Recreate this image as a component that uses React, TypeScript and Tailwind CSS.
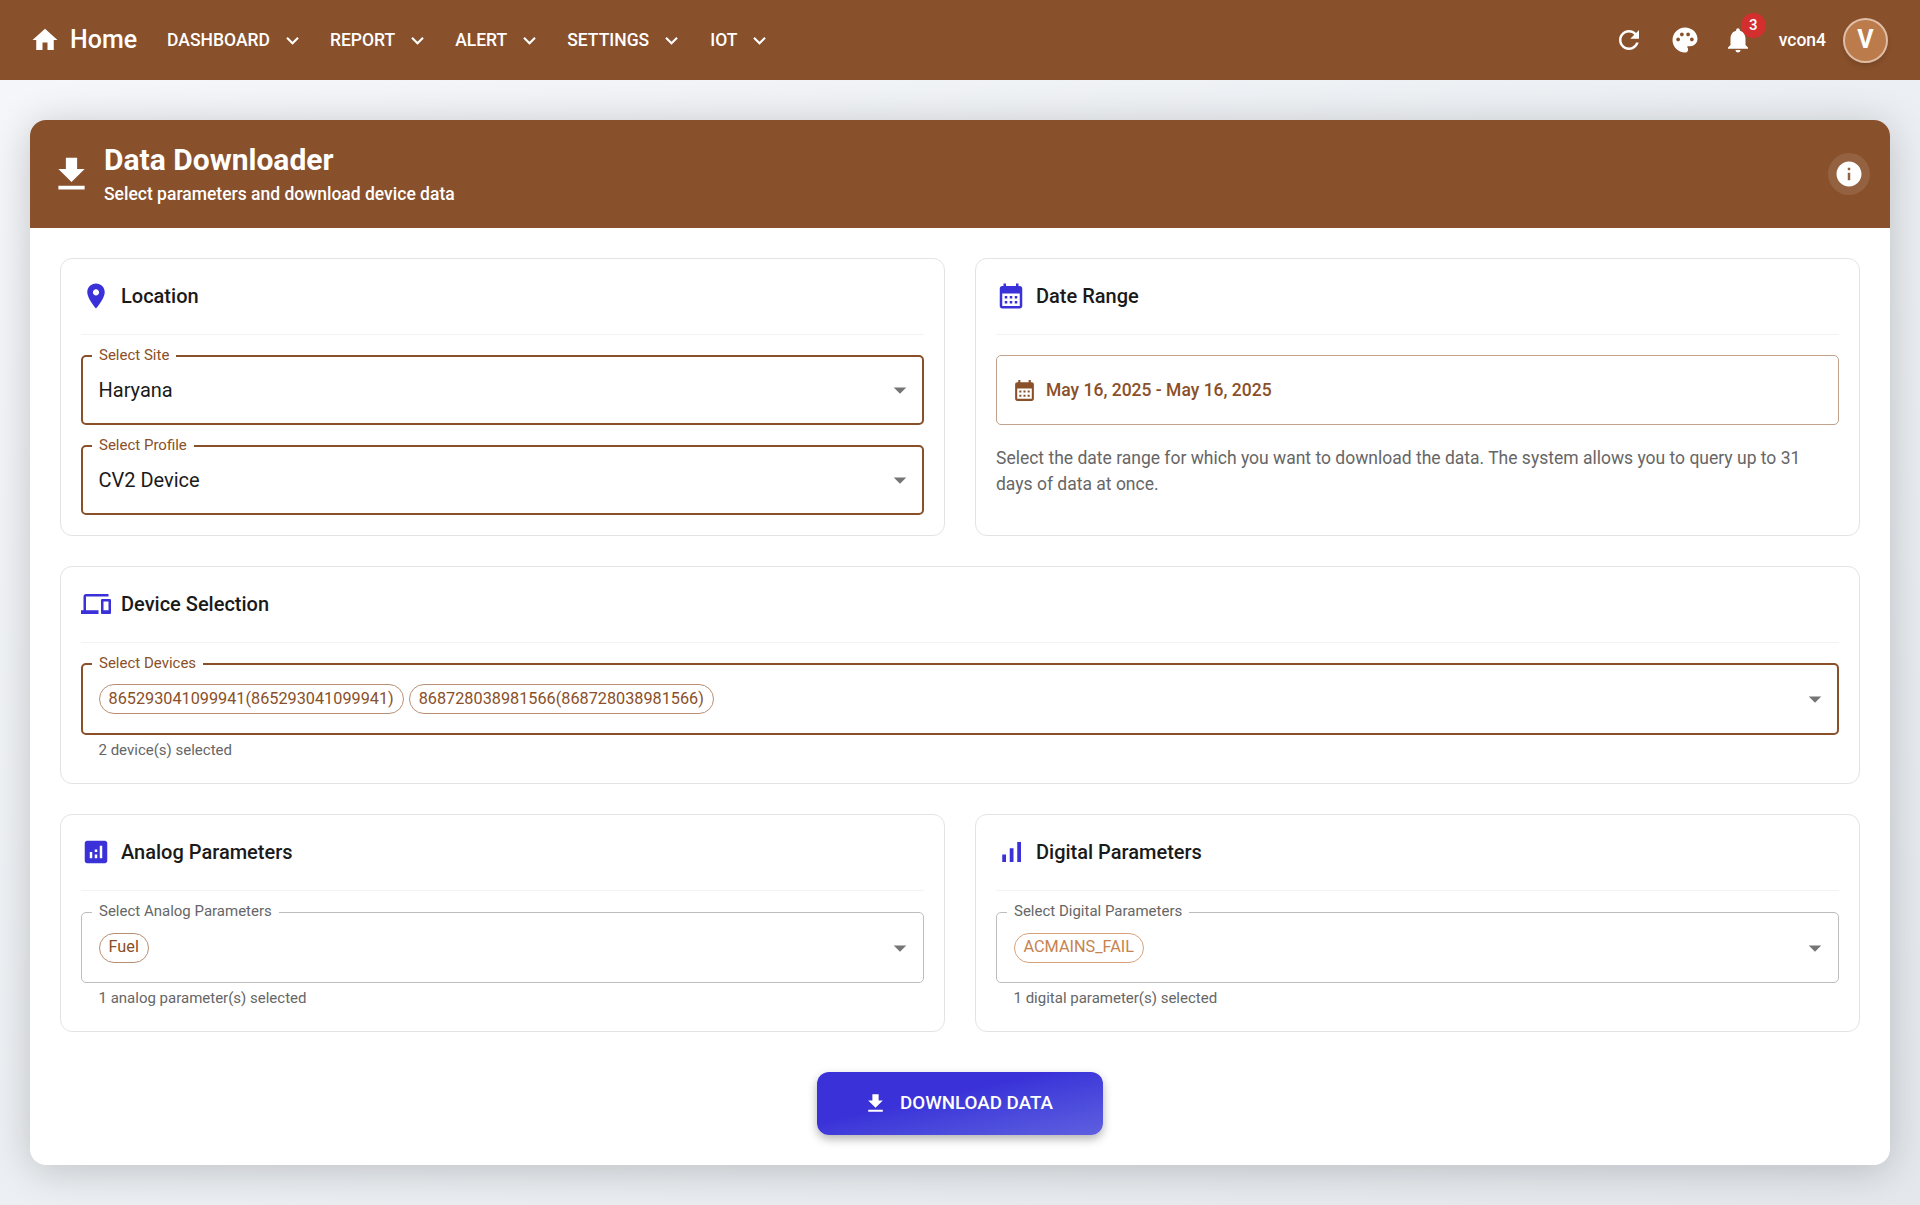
import React from "react";

const P = {
  home: "M10 20v-6h4v6h5v-8h3L12 3 2 12h3v8z",
  down: "M7.41 8.59 12 13.17l4.59-4.58L18 10l-6 6-6-6 1.41-1.41z",
  refresh: "M17.65 6.35C16.2 4.9 14.21 4 12 4c-4.42 0-7.99 3.58-7.99 8s3.57 8 7.99 8c3.73 0 6.84-2.55 7.73-6h-2.08c-.82 2.33-3.04 4-5.65 4-3.31 0-6-2.69-6-6s2.69-6 6-6c1.66 0 3.14.69 4.22 1.78L13 11h7V4l-2.35 2.35z",
  palette: "M12 2C6.49 2 2 6.49 2 12s4.49 10 10 10c1.38 0 2.5-1.12 2.5-2.5 0-.61-.23-1.2-.64-1.67-.08-.1-.13-.21-.13-.33 0-.28.22-.5.5-.5H16c3.31 0 6-2.69 6-6 0-4.96-4.49-9-10-9zm5.5 11c-.83 0-1.5-.67-1.5-1.5s.67-1.5 1.5-1.5 1.5.67 1.5 1.5-.67 1.5-1.5 1.5zm-3-4c-.83 0-1.5-.67-1.5-1.5S13.67 6 14.5 6s1.5.67 1.5 1.5S15.33 9 14.5 9zM5 11.5c0-.83.67-1.5 1.5-1.5s1.5.67 1.5 1.5S7.33 13 6.5 13 5 12.33 5 11.5zm6-4c0 .83-.67 1.5-1.5 1.5S8 8.33 8 7.5 8.67 6 9.5 6s1.5.67 1.5 1.5z",
  bell: "M12 22c1.1 0 2-.9 2-2h-4c0 1.1.89 2 2 2zm6-6v-5c0-3.07-1.64-5.64-4.5-6.32V4c0-.83-.67-1.5-1.5-1.5s-1.5.67-1.5 1.5v.68C7.63 5.36 6 7.92 6 11v5l-2 2v1h16v-1l-2-2z",
  info: "M12 2C6.48 2 2 6.48 2 12s4.48 10 10 10 10-4.48 10-10S17.52 2 12 2zm1 15h-2v-6h2v6zm0-8h-2V7h2v2z",
  download: "M5 20h14v-2H5v2zM19 9h-4V3H9v6H5l7 7 7-7z",
  pin: "M12 2C8.13 2 5 5.13 5 9c0 5.25 7 13 7 13s7-7.75 7-13c0-3.87-3.13-7-7-7zm0 9.5c-1.38 0-2.5-1.12-2.5-2.5s1.12-2.5 2.5-2.5 2.5 1.12 2.5 2.5-1.12 2.5-2.5 2.5z",
  calendar: "M19 4h-1V2h-2v2H8V2H6v2H5c-1.11 0-1.99.9-1.99 2L3 20c0 1.1.89 2 2 2h14c1.1 0 2-.9 2-2V6c0-1.1-.9-2-2-2zm0 16H5V10h14v10zM9 14H7v-2h2v2zm4 0h-2v-2h2v2zm4 0h-2v-2h2v2zm-8 4H7v-2h2v2zm4 0h-2v-2h2v2zm4 0h-2v-2h2v2z",
  devices: "M4 6h18V4H4c-1.1 0-2 .9-2 2v11H0v3h14v-3H4V6zm19 2h-6c-.55 0-1 .45-1 1v10c0 .55.45 1 1 1h6c.55 0 1-.45 1-1V9c0-.55-.45-1-1-1zm-1 9h-4v-7h4v7z",
  analytics: "M19 3H5c-1.1 0-2 .9-2 2v14c0 1.1.9 2 2 2h14c1.1 0 2-.9 2-2V5c0-1.1-.9-2-2-2zM9 17H7v-5h2v5zm4 0h-2v-3h2v3zm0-5h-2v-2h2v2zm4 5h-2V7h2v10z",
  signal: "M17 4h3v16h-3V4zM5 14h3v6H5v-6zm6-5h3v11h-3V9z",
  caret: "M7 10l5 5 5-5z",
};

function Icon({ d, className }: { d: string; className: string }) {
  return (
    <svg viewBox="0 0 24 24" fill="currentColor" className={className}>
      <path d={d} />
    </svg>
  );
}

function NavItem({ label, wide }: { label: string; wide?: boolean }) {
  return (
    <div className={wide ? "flex items-center gap-[10px] mr-[26px]" : "flex items-center gap-[10px] mr-[25px]"}>
      <span className="text-[17.5px] font-medium text-white">{label}</span>
      <Icon d={P.down} className="w-[25px] h-[25px] text-white" />
    </div>
  );
}

function Section({
  icon,
  title,
  low,
  children,
}: {
  icon: string;
  title: string;
  low?: boolean;
  children: React.ReactNode;
}) {
  return (
    <section className="border border-[#e3e3e3] rounded-[12px] bg-white px-[20px] pt-[20px] pb-[20px]">
      <div className="flex items-center gap-[10px] h-[34px]">
        <Icon d={icon} className="w-[30px] h-[30px] text-[#3a31d8] shrink-0" />
        <h2 className="text-[20px] font-medium text-[#1a1a1a]">{title}</h2>
      </div>
      <div className={low ? "border-b border-[#f3f3f3] h-[22px] mb-[21px]" : "border-b border-[#f3f3f3] h-[22px] mb-[20px]"} />
      {children}
    </section>
  );
}

function Field({
  label,
  focused,
  chips,
  children,
}: {
  label: string;
  focused?: boolean;
  chips?: boolean;
  children: React.ReactNode;
}) {
  const box = focused
    ? chips
      ? "relative h-[72px] rounded-[5px] border-2 border-[#8a5029] flex items-center justify-between pl-[15.5px] pr-[7px]"
      : "relative h-[70px] rounded-[5px] border-2 border-[#8a5029] flex items-center justify-between pl-[15.5px] pr-[7px]"
    : "relative h-[71px] rounded-[5px] border border-[#bdbdbd] flex items-center justify-between pl-[16.5px] pr-[8px]";
  return (
    <div className={box}>
      <span
        className={
          focused
            ? "absolute -top-[12px] left-[9px] bg-white px-[7px] text-[15px] leading-[20px] text-[#8a5029]"
            : "absolute -top-[12px] left-[10px] bg-white px-[7px] text-[15px] leading-[20px] text-[#666666]"
        }
      >
        {label}
      </span>
      <div className="flex items-center gap-[5px]">{children}</div>
      <Icon d={P.caret} className="w-[30px] h-[30px] text-[#757575]" />
    </div>
  );
}

function Chip({ label, light }: { label: string; light?: boolean }) {
  return (
    <span
      className={
        light
          ? "h-[30px] rounded-full border border-[#d8a27c] px-[9px] flex items-center text-[16.25px] text-[#c68350]"
          : "h-[30px] rounded-full border border-[#b98f74] px-[9px] flex items-center text-[16.25px] text-[#8a5029]"
      }
    >
      {label}
    </span>
  );
}

function Helper({ children }: { children: React.ReactNode }) {
  return <p className="mt-[3px] mb-[1px] pl-[17.5px] text-[15px] leading-[24px] text-[#666666]">{children}</p>;
}

export default function App() {
  return (
    <div className="min-h-[1205px] bg-gradient-to-br from-[#f5f7fa] to-[#e4e8ec] font-['Roboto',sans-serif]">
      <nav className="h-[80px] bg-[#88502b] flex items-center pl-[30px] pr-[32px]">
        <Icon d={P.home} className="w-[30px] h-[30px] text-white" />
        <span className="ml-[10px] mr-[30px] text-[25px] font-medium text-white">Home</span>
        <NavItem label="DASHBOARD" />
        <NavItem label="REPORT" />
        <NavItem label="ALERT" />
        <NavItem label="SETTINGS" wide />
        <NavItem label="IOT" />
        <div className="ml-auto flex items-center">
          <Icon d={P.refresh} className="w-[30px] h-[30px] text-white" />
          <Icon d={P.palette} className="ml-[26px] w-[30px] h-[30px] text-white" />
          <div className="relative ml-[23px]">
            <Icon d={P.bell} className="w-[30px] h-[30px] text-white" />
            <span className="absolute -top-[12px] left-[18px] w-[25px] h-[25px] rounded-full bg-[#d32f2f] text-white text-[15px] font-medium flex items-center justify-center">
              3
            </span>
          </div>
          <span className="ml-[26px] text-[17.5px] font-medium text-white">vcon4</span>
          <div className="ml-[17px] w-[45px] h-[45px] rounded-full bg-[#bc7b4a] border-[2.5px] border-[#dfbda6] shadow-md flex items-center justify-center text-white text-[25px] font-bold">
            V
          </div>
        </div>
      </nav>

      <main className="px-[30px] pt-[40px] pb-[40px]">
        <div className="rounded-[16px] bg-white shadow-[0_5px_40px_rgba(0,0,0,0.2)] overflow-hidden">
          <header className="h-[108px] bg-[#88502b] flex items-center pl-[19px] pr-[20px]">
            <Icon d={P.download} className="w-[45px] h-[45px] text-white" />
            <div className="ml-[10px]">
              <h1 className="text-[30px] leading-[38px] font-bold text-white">Data Downloader</h1>
              <p className="mt-[1px] text-[17.5px] leading-[28px] font-medium text-white">Select parameters and download device data</p>
            </div>
            <div className="ml-auto w-[42px] h-[42px] rounded-full bg-white/10 flex items-center justify-center">
              <Icon d={P.info} className="w-[30px] h-[30px] text-white" />
            </div>
          </header>

          <div className="p-[30px] flex flex-col gap-[30px]">
            <div className="grid grid-cols-2 gap-[30px]">
              <Section icon={P.pin} title="Location">
                <div className="flex flex-col gap-[20px]">
                  <Field label="Select Site" focused>
                    <span className="text-[20px] text-[#1a1a1a]">Haryana</span>
                  </Field>
                  <Field label="Select Profile" focused>
                    <span className="text-[20px] text-[#1a1a1a]">CV2 Device</span>
                  </Field>
                </div>
              </Section>
              <Section icon={P.calendar} title="Date Range">
                <div className="h-[70px] rounded-[5px] border border-[#c2a28c] flex items-center pl-[15px] gap-[9px]">
                  <Icon d={P.calendar} className="w-[25px] h-[25px] text-[#8a5029]" />
                  <span className="text-[17.5px] font-medium text-[#8a5029]">May 16, 2025 - May 16, 2025</span>
                </div>
                <p className="mt-[20px] text-[17.5px] leading-[26px] text-[#666666]">
                  Select the date range for which you want to download the data. The system allows you to query up to 31 days of data at once.
                </p>
              </Section>
            </div>

            <Section icon={P.devices} title="Device Selection">
              <Field label="Select Devices" focused chips>
                <Chip label="865293041099941(865293041099941)" />
                <Chip label="868728038981566(868728038981566)" />
              </Field>
              <Helper>2 device(s) selected</Helper>
            </Section>

            <div className="grid grid-cols-2 gap-[30px]">
              <Section icon={P.analytics} title="Analog Parameters" low>
                <Field label="Select Analog Parameters">
                  <Chip label="Fuel" />
                </Field>
                <Helper>1 analog parameter(s) selected</Helper>
              </Section>
              <Section icon={P.signal} title="Digital Parameters" low>
                <Field label="Select Digital Parameters">
                  <Chip label="ACMAINS_FAIL" light />
                </Field>
                <Helper>1 digital parameter(s) selected</Helper>
              </Section>
            </div>

            <div className="flex justify-center mt-[10px]">
              <button className="h-[63px] w-[286px] rounded-[12px] bg-gradient-to-br from-[#3a31d8] from-40% to-[#5f5fe0] shadow-[0_4px_10px_rgba(0,0,0,0.3)] flex items-center justify-center gap-[12px] pr-[4px] text-white text-[18.75px] font-medium">
                <Icon d={P.download} className="w-[25px] h-[25px]" />
                <span>DOWNLOAD DATA</span>
              </button>
            </div>
          </div>
        </div>
      </main>
    </div>
  );
}
